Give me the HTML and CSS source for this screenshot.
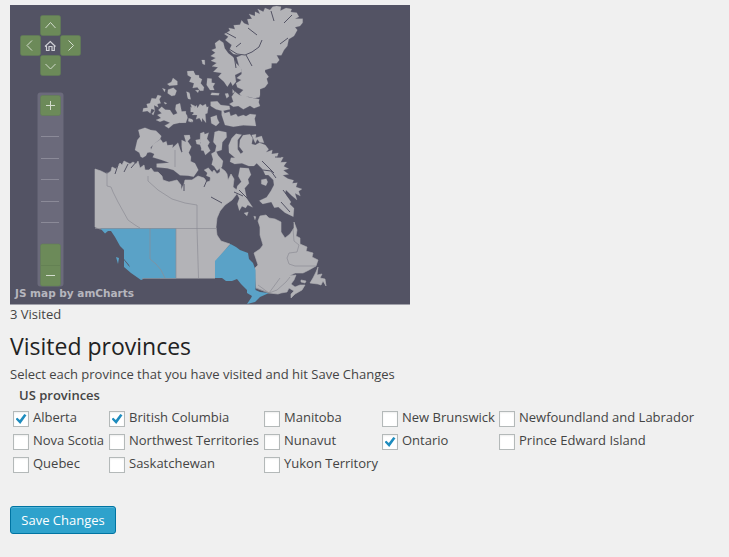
FILE: index.html
```html
<!DOCTYPE html>
<html lang="en">
<head>
<meta charset="utf-8">
<title>Visited provinces</title>
<link rel="stylesheet" href="styles.css">
</head>
<body>
<main>
<svg class="map" viewBox="10 5 400 300" role="img" aria-label="Map of Canada">
  <rect class="sea" x="10" y="5" width="400" height="299.500"/>
  <g class="land">
    <!-- Northern islands -->
    <g transform="translate(180 0) scale(.33333)">
      <path d="M290 18L303 20 301 32 318 24 335 27 332 36 350 38 357 50 345 56 368 56 368 68 360 78 345 82 352 90 342 108 326 118 322 138 312 150 304 166 290 166 298 180 290 190 275 190 274 204 255 210 255 216 266 230 260 236 264 250 255 262 240 268 240 285 238 292 222 295 205 290 190 292 178 282 190 270 172 262 168 250 184 240 170 234 185 222 184 208 178 200 170 172 185 166 160 162 148 150 155 135 136 120 145 110 133 102 150 92 146 84 165 88 161 76 180 74 185 61 192 70 207 76 202 58 216 56 207 42 225 48 225 35 240 42 233 27 250 35 255 24 270 30 278 20Z"/>
      <path d="M118 120L130 128 134 145 145 160 160 172 168 190 184 205 185 215 165 225 168 245 158 257 152 245 142 260 132 245 115 230 125 219 100 215 114 202 96 199 110 189 93 182 107 174 92 168 106 158 95 150 108 145 105 130Z"/>
      <path d="M22 215L40 213 48 228 66 238 62 250 72 262 70 272 60 272 52 262 38 264 42 250 28 245 34 232ZM82 235L95 236 95 248 105 250 99 260 103 270 90 270 80 255ZM20 275L28 278 32 298 24 296ZM46 271L57 270 54 278ZM65 180L74 180 75 194 68 192ZM95 278L118 280 116 286 92 285ZM135 281L144 280 147 289 140 295ZM158 268L164 276 158 280Z"/>
      <path d="M165 275L178 285 200 290 238 298 236 307 240 318 222 325 210 317 190 328 175 318 160 320 148 312 160 305 155 290ZM92 305L112 304 122 315 148 318 150 328 130 332 134 340 148 335 152 348 168 342 174 350 190 345 198 349 210 342 228 344 224 356 228 378 190 376 160 380 135 375 125 345 125 332 108 328 92 318Z"/>
      <path d="M32 321L40 325 50 316 52 325 60 312 68 317 77 312 80 322 85 320 82 340 76 342 78 368 66 354 66 366 58 354 48 358 52 344 36 345 46 336 32 336ZM0 335L14 335 22 348 18 368 0 368ZM92 352L110 346 112 356 118 368 108 378 94 370ZM26 355L37 358 34 367 25 364Z"/>
    </g>
    <g transform="translate(90 60) scale(.33333)">
      <path d="M232 72L244 66 249 54 262 64 262 75 238 77ZM234 89L250 83 260 92 255 106 245 108 233 100ZM217 85L226 88 224 96ZM203 105L214 108 208 118 212 130 202 132 205 142 192 136 194 150 184 146 181 160 172 153 158 155 160 145 173 143 170 132 180 130 185 115 198 116ZM195 150L190 165 185 162ZM215 140L226 149 240 150 250 165 262 160 256 148 258 134 270 130 275 155 288 154 286 165 293 173 286 187 270 188 250 193 236 205 224 197 240 188 222 181 210 185 198 180 213 174 202 165 215 160 205 150ZM292 34L310 33 314 45 327 46 328 80 315 73 310 62 300 65 307 54 293 46ZM290 95L298 102 300 118 294 114ZM222 126L231 130 225 133Z"/>
      <path d="M145 210L165 203 182 210 198 212 214 228 210 238 195 250 182 262 184 276 172 278 168 287 158 293 152 290 148 278 135 270 142 240 150 230Z"/>
      <path d="M190 252L212 238 219 248 229 244 232 256 249 254 247 264 264 248 270 266 275 280 275 240 288 246 282 226 299 225 301 235 293 244 304 260 296 278 303 290 302 304 315 310 325 330 311 350 295 347 270 346 250 330 232 325 200 322 200 311 238 308 215 300 188 292 193 282 180 276Z"/>
      <path d="M317 240L330 238 330 250 348 246 352 264 336 270 330 254 320 252ZM302 132L315 138 312 147 330 153 328 167 312 163ZM302 180L309 180 308 187Z"/>
    </g>
    <!-- Baffin and the eastern Arctic -->
    <g transform="translate(200 120) scale(.33333)">
      <path d="M95 55L108 41 125 44 113 60 113 88 122 101 130 96 118 80 120 60 129 46 150 43 158 55 155 72 166 75 178 68 196 75 206 88 198 97 217 90 215 102 235 99 231 112 250 112 242 127 260 126 251 139 266 146 250 151 266 163 248 166 264 176 281 181 277 190 292 188 288 201 306 207 296 214 301 228 285 220 291 240 274 226 258 210 255 220 273 246 269 252 282 265 280 290 255 278 235 261 223 263 214 246 188 252 178 242 200 232 213 212 222 195 220 180 205 165 196 165 188 148 170 130 162 138 146 138 126 130 104 132 90 125 93 113 105 113 87 98 86 76ZM155 45L168 43 167 53 185 48 192 68 179 67 172 58 166 70ZM44 36L56 32 79 37 80 52 67 67 65 90 45 96 49 77 40 66ZM1 40L12 36 14 43 26 38 21 56 29 67 23 77 31 92 16 105 11 92 3 91 9 76 0 67ZM34 101L48 93 54 106 69 123 66 140 51 152 42 139 35 134 39 118ZM12 150L25 143 37 157 33 173 19 167 22 159Z"/>
      <path d="M120 143L146 145 153 164 144 178 147 190 134 205 140 235 158 262 143 255 137 264 126 259 118 272 112 251 118 235 108 215 112 198 124 185 115 169ZM184 179L199 176 203 186 198 197 184 192ZM132 279L145 276 141 288ZM161 288L168 290 165 300Z"/>
    </g>
    <!-- Mainland: territories, prairies and the east -->
    <path d="M95 169L101 171 107 174 111 171 112 167 116 169 120 163 122 165 124 161 130 164 133 162 136 164 138 161 140 168 144 165 145 170 149 170 151 168 154 172 158 172 162 176 163 180 169 182 177 180 181 185 181 190 184 184 185 180 192 180 198 176 204 178 207 182 210 181 211 174 214 170 217 174 220 172 220 165 221 168 225 171 227 174 228 180 231 174 234 179 233 187 238 191 236 195 232 200 225 205 220 211 217 218 216 227 217 235 221 241 230 244 215 262 215 278 160 278 150 229 100 229 95 227Z"/>
    <path d="M255 268L258 265 254 253 260 249 263 245 260 235 260 227 258 221 260 216 266 215 269 218 275 219 281 222 281 232 285 238 290 234 294 228 294 222 297 230 296 236 300 238 300 244 307 247 306 251 313 253 312 257 318 260 316 266 309 270 303 273 295 273 287 277 282 280 288 276 296 275 294 280 291 284 295 287 300 285 305 285 302 290 295 294 291 298 291 294 294 291 289 288 287 292 281 293 278 294 269 293 256 288Z"/>
    <path d="M318 267L316 272 313 278 310 283 318 284 321 285 323 281 326 286 325 279 320 278 322 274 317 275ZM301 280L306 281 305 283 301 282Z"/>
  </g>
  <g class="visited">
    <path d="M100 228H176V278.500H144L141.500 280 136 276 131.500 271.500 129 265 124 259 124 250 120 246 115 237 111 231 108 231 105 233.500ZM116 257L119 258 118 264ZM124 260L132 270 140 277 141 280 131 273 124 267Z"/>
    <path d="M230.500 244L236 247 240 250 248 253 249 259 253 263 255.500 270V290L260 292 269 293 260 297 255 302 247 304 251 298 252 296 247 293 247 290 241 284 237 279 232 281 226 281 222 278 215 278V261Z"/>
  </g>
  <g class="fjord">
    <path d="M229 49L237 54 245 55 252 52 259 47 262 40M236 47L241 43M246 55L252 66M234 55L236 68M284 23L292 15M271 11L274 21M248 28L257 35M225 32L236 38M274 69L284 63M288 38L280 44M180 145L182 152M263 170L271 171 276 178M269 146L276 151M275 157L281 157M211 197L222 203M239 190L247 198M234 192L243 196M250 200L255 202M262 161L274 173M283 190L290 199M281 202L290 212M128 164L124 172M137 161L131 168M118 165L115 174M207 180L204 187M184 184V191"/>
    <path d="M258 285L269 293 277 290 286 282 290 277" class="border"/>
  </g>
  <path class="border" d="M107 172V186L111 187 113 192 118 202 123 211 128 220 135 225 140 228M148 176V181L158 190 172 199 185 203 197 205V228M95 228.500H217M150 228V259L156 264 161 270 165 278M176 228V278M197 228L198.500 278M142 278.500H215M175 150V167M293 229L294 241 299 245 297 252 289 253 287 258 289 264 295 266H316M256 288L269 293 280 278"/>

  <!-- Pan controls -->
  <g class="pad">
    <rect x="40.500" y="15.500" width="20" height="20" rx="2"/><rect x="20.500" y="35.500" width="20" height="20" rx="2"/><rect x="60.500" y="35.500" width="20" height="20" rx="2"/><rect x="40.500" y="55.500" width="20" height="20" rx="2"/>
  </g>
  <path class="arrow" d="M45.500 28L50.500 22.500 55.500 28M32 40.500L27 45.500 32 50.500M68.500 40.500L73.500 45.500 68.500 50.500M45.500 64L50.500 69 55.500 64"/>
  <path class="home" d="M45 46.500L50.300 41.500 55.500 46.500M46.500 46V50.500H49V46.500H52V50.500H54.300V46"/>

  <!-- Zoom slider -->
  <rect class="track" x="37.500" y="92.500" width="26" height="194" rx="3"/>
  <rect class="handle" x="40.500" y="95.500" width="20" height="20" rx="2"/>
  <rect class="handle" x="40.500" y="244" width="20" height="42" rx="2"/>
  <path class="tick" d="M41 136.500H59M41 158.500H59M41 179.500H59M41 201.500H59M41 222.500H59"/>
  <path class="seam" d="M41 265.500H60"/>
  <path class="arrow" d="M46 105.500H55M50.500 101V110M46 275.500H55"/>
  <text class="credit" x="15" y="297" textLength="119" lengthAdjust="spacingAndGlyphs">JS map by amCharts</text>
</svg>
<p class="count">3 Visited</p>
<h2>Visited provinces</h2>
<p class="hint">Select each province that you have visited and hit Save Changes</p>
<form>
  <h3>US provinces</h3>
  <div class="provinces">
    <label><input type="checkbox" checked>Alberta</label>
    <label><input type="checkbox" checked>British Columbia</label>
    <label><input type="checkbox">Manitoba</label>
    <label><input type="checkbox">New Brunswick</label>
    <label><input type="checkbox">Newfoundland and Labrador</label>
    <label><input type="checkbox">Nova Scotia</label>
    <label><input type="checkbox">Northwest Territories</label>
    <label><input type="checkbox">Nunavut</label>
    <label><input type="checkbox" checked>Ontario</label>
    <label><input type="checkbox">Prince Edward Island</label>
    <label><input type="checkbox">Quebec</label>
    <label><input type="checkbox">Saskatchewan</label>
    <label><input type="checkbox">Yukon Territory</label>
  </div>
  <button type="button">Save Changes</button>
</form>
</main>
</body>
</html>
```
FILE: styles.css
```css
* { box-sizing: border-box; }
body {
  margin: 0;
  background: #f0f0f0;
  color: #444;
  font: 13px/18px "Open Sans", sans-serif;
}
main { padding: 5px 10px 0; }
p, h2, h3 { margin: 0; }

.map { display: block; width: 400px; height: 300px; }
.sea { fill: #535364; }
.land { fill: #b3b3b7; stroke: #b3b3b7; stroke-width: .6; stroke-linejoin: round; }
.visited { fill: #5aa2c7; }
.fjord { fill: none; stroke: #535364; stroke-width: 1; }
.border { fill: none; stroke: #8d8d95; stroke-width: .7; }
.pad, .handle { fill: #6c8a59; stroke: #627d55; stroke-width: .6; }
.arrow { fill: none; stroke: #d3dccd; stroke-width: 1; }
.home { fill: none; stroke: #d0d0d6; stroke-width: 1.2; }
.track { fill: #6b6a7b; }
.tick { stroke: #8b8a98; }
.seam { stroke: #648153; }
.credit { fill: #b6b6be; font: bold 11px "DejaVu Sans", sans-serif; }

h2 {
  margin-top: 7px;
  color: #222;
  font-size: 23px;
  font-weight: 400;
  line-height: 32px;
}
.hint { margin-top: 3px; }
h3 {
  padding-left: 9px;
  margin-top: 3px;
  font-size: 13px;
  font-weight: 600;
  line-height: 18px;
}
.provinces {
  display: grid;
  grid-template-columns: 96px 155px 118px 117px max-content;
  grid-auto-rows: 23px;
  padding-left: 3px;
  margin-top: 4px;
}
label { display: flex; gap: 4px; line-height: 18px; white-space: nowrap; }
input {
  appearance: none;
  display: grid;
  place-items: center;
  width: 16px;
  height: 16px;
  margin: 3px 0 0;
  border: 1px solid #b4b9b9;
  background: #fff;
  box-shadow: inset 0 1px 2px rgba(0, 0, 0, .07);
}
input:checked::before {
  content: "";
  width: 11px;
  height: 11px;
  background: #1e8cbe;
  clip-path: polygon(0 50%, 17% 38%, 39% 59%, 80% 5%, 100% 15%, 43% 95%);
}
button {
  display: block;
  width: 106px;
  height: 28px;
  margin-top: 29px;
  padding: 0;
  border: 1px solid #0074a2;
  border-radius: 3px;
  background: #2ea2cc;
  box-shadow: inset 0 1px 0 rgba(120, 200, 230, .5);
  color: #fff;
  font: 13px/26px "Open Sans", sans-serif;
}
```
